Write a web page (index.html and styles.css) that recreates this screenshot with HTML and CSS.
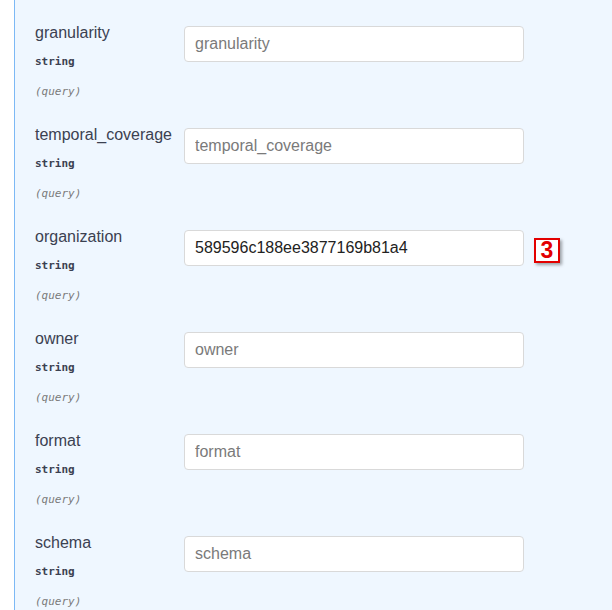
FILE: index.html
```html
<!DOCTYPE html>
<html>
<head>
<meta charset="utf-8">
<link rel="stylesheet" href="styles.css">
</head>
<body>
<div class="opblock">
  <div class="param">
    <div class="col-name">
      <div class="name">granularity</div>
      <div class="type">string</div>
      <div class="in">(query)</div>
    </div>
    <div class="col-input"><input class="field" placeholder="granularity"></div>
  </div>
  <div class="param">
    <div class="col-name">
      <div class="name">temporal_coverage</div>
      <div class="type">string</div>
      <div class="in">(query)</div>
    </div>
    <div class="col-input"><input class="field" placeholder="temporal_coverage"></div>
  </div>
  <div class="param">
    <div class="col-name">
      <div class="name">organization</div>
      <div class="type">string</div>
      <div class="in">(query)</div>
    </div>
    <div class="col-input"><input class="field" placeholder="organization" value="589596c188ee3877169b81a4"><span class="badge">3</span></div>
  </div>
  <div class="param">
    <div class="col-name">
      <div class="name">owner</div>
      <div class="type">string</div>
      <div class="in">(query)</div>
    </div>
    <div class="col-input"><input class="field" placeholder="owner"></div>
  </div>
  <div class="param">
    <div class="col-name">
      <div class="name">format</div>
      <div class="type">string</div>
      <div class="in">(query)</div>
    </div>
    <div class="col-input"><input class="field" placeholder="format"></div>
  </div>
  <div class="param">
    <div class="col-name">
      <div class="name">schema</div>
      <div class="type">string</div>
      <div class="in">(query)</div>
    </div>
    <div class="col-input"><input class="field" placeholder="schema"></div>
  </div>
</div>
</body>
</html>
```
FILE: styles.css
```css
html, body {
  margin: 0;
  padding: 0;
  background: #ffffff;
  font-family: "Liberation Sans", Arial, sans-serif;
}
.opblock {
  margin-left: 14px;
  border-left: 1px solid #7db9f5;
  background: #eff7ff;
  padding-left: 20px;
  height: 610px;
  overflow: hidden;
}
.param {
  display: grid;
  grid-template-columns: 149px 340px;
  height: 102px;
}
.col-name {
  padding-top: 24px;
}
.name {
  font-size: 16px;
  line-height: 18px;
  color: #3b4151;
}
.type {
  margin-top: 12px;
  font-family: "DejaVu Sans Mono", monospace;
  font-size: 11px;
  font-weight: bold;
  line-height: 16px;
  color: #3b4151;
}
.in {
  margin-top: 14px;
  font-family: "DejaVu Sans Mono", monospace;
  font-size: 11px;
  font-style: italic;
  line-height: 16px;
  color: #7a7a7a;
}
.col-input {
  position: relative;
  padding-top: 26px;
}
.field {
  box-sizing: border-box;
  width: 340px;
  height: 36px;
  margin: 0;
  padding: 0 10px;
  border: 1px solid #d9d9d9;
  border-radius: 4px;
  background: #ffffff;
  font-family: "Liberation Sans", Arial, sans-serif;
  font-size: 16px;
  color: #222222;
  outline: none;
}
.field::placeholder {
  color: #7a7a7a;
}
.badge {
  position: absolute;
  left: 350px;
  top: 34px;
  box-sizing: border-box;
  width: 26px;
  height: 25px;
  border: 2px solid #e30000;
  background: #ffffff;
  color: #e30000;
  font-family: "Liberation Sans", Arial, sans-serif;
  font-weight: bold;
  font-size: 23px;
  line-height: 21px;
  text-align: center;
  box-shadow: 2px 2px 3px rgba(0,0,0,0.35);
}
```
